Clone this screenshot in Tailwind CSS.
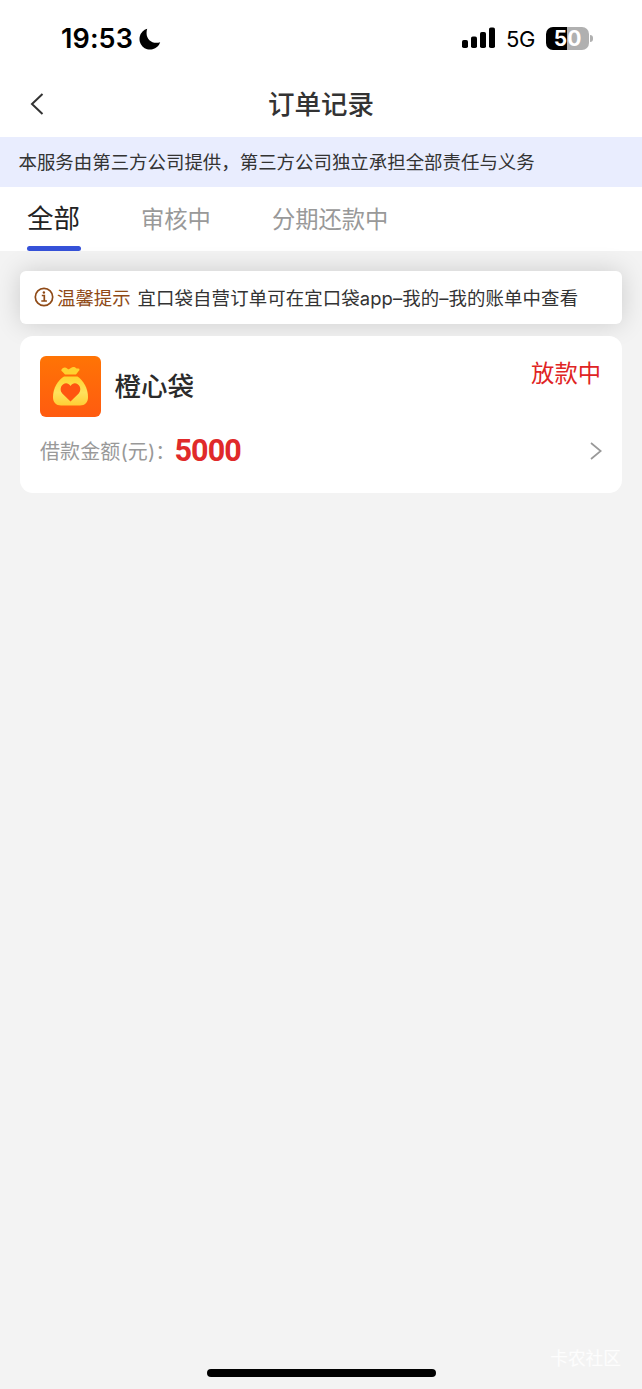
<!DOCTYPE html>
<html lang="zh-CN">
<head>
  <meta charset="UTF-8" />
  <meta name="viewport" content="width=device-width, initial-scale=1.0" />
  <title>订单记录</title>
  <script src="https://cdn.jsdelivr.net/npm/@tailwindcss/browser@4"></script>
  <style>
      body {
          font-family: 'Inter', 'Noto Sans CJK SC', sans-serif;
      }
  </style>
</head>
<body class="bg-[#f3f3f3] text-[#333] whitespace-nowrap">
  <div class="relative flex flex-col h-[1389px] w-[642px] overflow-hidden">

    <!-- Status bar -->
    <div class="bg-white h-[72px] shrink-0 flex items-center pl-[61px] pr-[49px] pt-[5px] text-black">
      <span class="text-[27px] leading-none font-semibold w-[71px] tracking-[0.1px]">19:53</span>
      <svg class="ml-[7px]" width="22" height="22" viewBox="0 0 22 22">
        <path d="M8.2 .8A10.6 10.6 0 1 0 21.2 14.2C13 17 5.200 10.500 8.200 .8Z" fill="#000" />
      </svg>
      <svg class="ml-auto -mt-[1px]" width="33" height="22" viewBox="0 0 33 22">
        <rect x="0" y="13" width="6" height="8" rx="1.800" />
        <rect x="9" y="9.500" width="6" height="11.500" rx="1.800" />
        <rect x="18" y="5" width="6" height="16" rx="1.800" />
        <rect x="27" y="0.500" width="6" height="20.500" rx="1.800" />
      </svg>
      <span class="ml-[11px] w-[30px] text-[22px] leading-none tracking-[-0.3px]">5G</span>
      <div class="relative ml-[10px] w-[43px] h-[23px] rounded-[7px] bg-linear-to-r from-black from-50% to-[#b0b0b0] to-50% text-white text-[21px] font-bold leading-[23px] text-center">50</div>
      <div class="ml-[1px] w-[3px] h-[7px] rounded-r-full bg-[#b0b0b0]"></div>
    </div>

    <!-- Nav bar -->
    <div class="bg-white h-[65px] shrink-0 grid grid-cols-3 items-center">
      <svg class="ml-[30px] -mt-[2px]" width="14" height="22" viewBox="0 0 14 22" fill="none" stroke="#333" stroke-width="2">
        <path d="M12.500 1L2 11L12.500 21" />
      </svg>
      <h1 class="text-center text-[26.500px] leading-none font-medium">订单记录</h1>
    </div>

    <div class="bg-[#e9edfe] h-[50px] shrink-0 pl-[18.500px] text-[18.450px] leading-[51px]">本服务由第三方公司提供，第三方公司独立承担全部责任与义务</div>

    <!-- Tabs -->
    <div class="bg-white h-[64px] shrink-0 flex pl-[27px] text-[23.300px] leading-[66px] text-[#999]">
      <div class="flex flex-col w-[54px] text-[26.500px] leading-[63px] text-[#222]">
        <span class="h-[58.500px]">全部</span>
        <span class="h-[5px] rounded-full bg-[#3652d9]"></span>
      </div>
      <span class="ml-[60px]">审核中</span>
      <span class="ml-[61px]">分期还款中</span>
    </div>

    <!-- Tip -->
    <div class="mt-[20px] mx-[20px] h-[53px] shrink-0 rounded-[6px] bg-white shadow-[0_0_26px_rgba(0,0,0,0.16)] flex items-center pl-[14px] text-[18.400px] leading-[54px]">
      <svg class="mr-[3px] -mt-[2px]" width="20" height="20" viewBox="0 0 20 20" fill="none" stroke="#8f4a16" stroke-width="1.700">
        <circle cx="10" cy="10" r="8.700" />
        <path d="M7.800 8.500H10.300V14M7.300 14H12.900" />
        <circle cx="9.900" cy="5.500" r="1.200" fill="#8f4a16" stroke="none" />
      </svg>
      <span class="text-[#8f4a16]">温馨提示</span>
      <span class="ml-[7px] tracking-[0.120px]">宜口袋自营订单可在宜口袋app–我的–我的账单中查看</span>
    </div>

    <!-- Order card -->
    <div class="relative mt-[12px] mx-[20px] h-[157px] shrink-0 rounded-[13px] bg-white px-[20px] pt-[20px]">
      <div class="flex">
        <svg width="61" height="61" viewBox="0 0 61 61">
          <defs>
            <linearGradient id="tile" x1="0" y1="0" x2="0" y2="1">
              <stop offset="0" stop-color="#ff7405" />
              <stop offset="1" stop-color="#ff5b10" />
            </linearGradient>
            <linearGradient id="bag" x1="0" y1="0" x2="0" y2="1">
              <stop offset="0" stop-color="#ffd32e" />
              <stop offset=".55" stop-color="#ffe25c" />
              <stop offset="1" stop-color="#ffce35" />
            </linearGradient>
          </defs>
          <rect width="61" height="61" rx="6" fill="url(#tile)" />
          <path d="M21.500 13.500C23 11 25.500 10.800 27.500 12.700C29.500 14.500 31 10.800 34 11C36 11.200 35.500 13 37.500 12.500C40 12 40 14 38.500 15.300L36 18.500H25L22.500 15.800C21.500 15.200 21 14.500 21.500 13.500Z" fill="#ffd12f" />
          <path d="M24 20.500H37.500C43 24 48 32 48 41C48 46.500 45 49.500 40 49.500H21C16 49.500 13 46.500 13 41C13 32 18 24 24 20.500Z" fill="url(#bag)" />
          <path d="M30.500 45.500L22.300 37.500C17 31 26 23 30.500 30C35 23 44 31 38.700 37.500Z" fill="#ff5510" />
        </svg>
        <h2 class="ml-[13.500px] text-[26.500px] leading-[60px] font-medium text-[#2b2b2b]">橙心袋</h2>
        <span class="ml-auto mr-[1px] text-[23.300px] leading-[36px] text-[#e02424]">放款中</span>
      </div>
      <div class="flex items-center h-[67px]">
        <span class="w-[134.500px] pt-[2px] text-[20px] tracking-[0.100px] text-[#999]">借款金额(元)：</span>
        <span class="font-[Roboto] pt-[1px] text-[30.500px] font-bold text-[#e02a2a] tracking-[-0.900px]">5000</span>
        <svg class="ml-auto" width="12" height="18" viewBox="0 0 12 18" fill="none" stroke="#999" stroke-width="1.700">
          <path d="M1 1L10.700 9L1 17" />
        </svg>
      </div>
    </div>

    <!-- Watermark and home indicator -->
    <div class="mt-auto h-[44px] shrink-0 flex flex-col items-end pr-[21px]">
      <span class="h-[24px] text-[17.700px] leading-[28px] text-white/80">卡农社区</span>
      <span class="h-[8px] w-[229px] rounded-full bg-black mr-[185px]"></span>
    </div>
  </div>
</body>
</html>
